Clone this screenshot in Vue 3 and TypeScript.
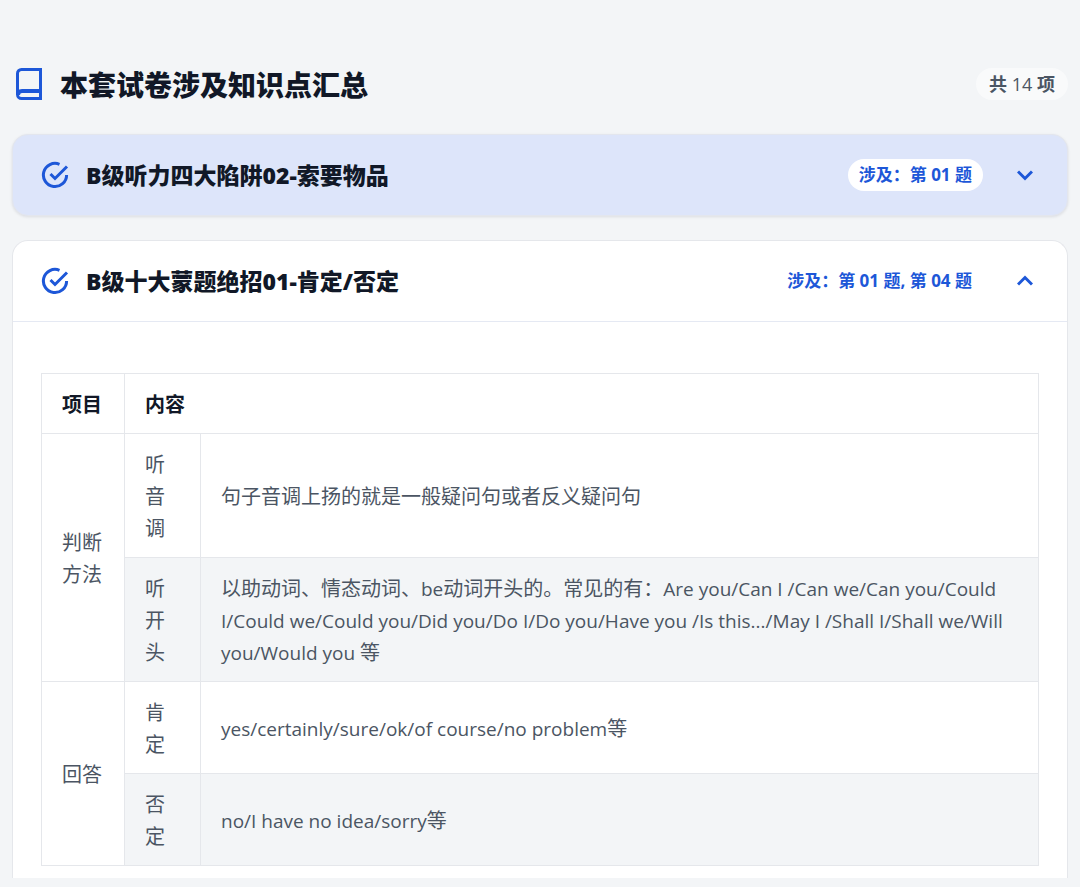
<script setup lang="ts">
import { ref } from 'vue'

interface Cell {
  text: string
  rowspan?: number
  shaded?: boolean
}

interface Run {
  text: string
  latin: boolean
}

interface Topic {
  id: number
  title: string
  refs: string
}

const total = 14
const topics: Topic[] = [
  { id: 1, title: 'B级听力四大陷阱02-索要物品', refs: '涉及：第 01 题' },
  { id: 2, title: 'B级十大蒙题绝招01-肯定/否定', refs: '涉及：第 01 题, 第 04 题' },
]
const rows: Cell[][] = [
  [
    { text: '判断方法', rowspan: 2 },
    { text: '听音调' },
    { text: '句子音调上扬的就是一般疑问句或者反义疑问句' },
  ],
  [
    { text: '听开头', shaded: true },
    {
      text: '以助动词、情态动词、be动词开头的。常见的有：Are you/Can I /Can we/Can you/Could I/Could we/Could you/Did you/Do I/Do you/Have you /Is this.../May I /Shall I/Shall we/Will you/Would you 等',
      shaded: true,
    },
  ],
  [
    { text: '回答', rowspan: 2 },
    { text: '肯定' },
    { text: 'yes/certainly/sure/ok/of course/no problem等' },
  ],
  [
    { text: '否定', shaded: true },
    { text: 'no/I have no idea/sorry等', shaded: true },
  ],
]

// English runs are set slightly smaller than the Chinese text around them.
function runs(text: string): Run[] {
  const parts = text.match(/[\x20-\x7e]+|[^\x20-\x7e]+/g) ?? []
  return parts.map((p) => ({ text: p, latin: p.charCodeAt(0) < 127 }))
}

const openId = ref<number | null>(2)
function toggle(id: number) {
  openId.value = openId.value === id ? null : id
}
</script>

<template>
  <main class="page">
    <header class="head">
      <svg class="book" viewBox="0 0 26 32" fill="none" stroke="currentColor" aria-hidden="true">
        <path stroke-width="3" d="M1.5 27V5.5a4 4 0 0 1 4-4h19v29h-19a4 4 0 0 1-4-4" />
        <path stroke-width="4" d="M2 27c0-2.5 1.5-4 4-4h18" />
      </svg>
      <h1>本套试卷涉及知识点汇总</h1>
      <span class="count">共 <span class="num">{{ total }}</span> 项</span>
    </header>

    <section v-for="t in topics" :key="t.id" class="card" :class="{ open: openId === t.id }">
      <button class="bar" type="button" :aria-expanded="openId === t.id" @click="toggle(t.id)">
        <svg class="check" viewBox="0 0 28 28" fill="none" stroke="currentColor" stroke-width="3" aria-hidden="true">
          <path d="M18.5 3.3A11.6 11.6 0 1 0 25.6 14" />
          <path d="M9.5 13l4.5 4.5L26 5.5" />
        </svg>
        <span class="title">{{ t.title }}</span>
        <span class="refs">{{ t.refs }}</span>
        <svg class="chev" viewBox="0 0 16 16" fill="none" stroke="currentColor" stroke-width="3" aria-hidden="true">
          <path d="M1 4.5l7 7 7-7" />
        </svg>
      </button>
      <div v-if="openId === t.id" class="body">
        <table>
          <colgroup>
            <col class="c1" />
            <col class="c2" />
            <col />
          </colgroup>
          <thead>
            <tr>
              <th scope="col">项目</th>
              <th scope="col" colspan="2">内容</th>
            </tr>
          </thead>
          <tbody>
            <tr v-for="(row, i) in rows" :key="i">
              <td v-for="c in row" :key="c.text" :rowspan="c.rowspan" :class="{ shaded: c.shaded }"><span v-for="(r, k) in runs(c.text)" :key="k" :class="{ latin: r.latin }">{{ r.text }}</span></td>
            </tr>
          </tbody>
        </table>
      </div>
    </section>
  </main>
</template>

<style>
body {
  background: #f3f5f7;
}
</style>

<style scoped>
.page {
  padding: 64px 12px 8px;
  font-family: 'Open Sans', 'Noto Sans CJK SC', sans-serif;
  color: #111827;
}
.head {
  display: flex;
  align-items: center;
  height: 40px;
  margin-bottom: 30px;
  padding-left: 4px;
}
.book {
  width: 26px;
  height: 32px;
  margin-right: 18px;
  color: #1d57d8;
}
h1 {
  margin: 0;
  font-family: 'Noto Sans CJK SC', sans-serif;
  font-size: 28px;
  line-height: 40px;
  font-weight: 800;
}
.count {
  margin-left: auto;
  padding: 0 13px;
  border-radius: 16px;
  background: #f9fafb;
  color: #4b5563;
  font-size: 18px;
  line-height: 32px;
  font-weight: 600;
}
.num {
  font-weight: 500;
}
.card {
  margin-bottom: 24px;
  border: 1px solid #e3e6ee;
  border-radius: 16px;
  background: #dde5fa;
  box-shadow: 0 1px 3px rgba(17, 24, 39, 0.1);
}
.card.open {
  margin-bottom: 0;
  border-color: #e5e7eb;
  border-bottom: 0;
  border-radius: 16px 16px 0 0;
  background: #fff;
  box-shadow: none;
}
.bar {
  display: flex;
  align-items: center;
  width: 100%;
  height: 80px;
  padding: 0 34px 0 28px;
  border: 0;
  background: none;
  color: #1d57d8;
  font: inherit;
  text-align: left;
  cursor: pointer;
}
.check {
  width: 28px;
  height: 28px;
  margin-right: 17px;
}
.title {
  color: #111827;
  font-size: 23px;
  line-height: 32px;
  font-weight: 800;
}
.refs {
  margin-left: auto;
  padding: 0 11px;
  border-radius: 16px;
  background: #fff;
  font-size: 17px;
  line-height: 32px;
  font-weight: 700;
}
.chev {
  width: 16px;
  height: 16px;
  margin-left: 34px;
}
.open .chev {
  transform: rotate(180deg);
}
.body {
  padding: 51px 28px 12px;
  border-top: 1px solid #e5e9f3;
}
table {
  width: 100%;
  border-collapse: collapse;
  table-layout: fixed;
  font-family: 'Noto Sans CJK SC', sans-serif;
  font-size: 20px;
  line-height: 32px;
  color: #4b5563;
}
.c1 {
  width: 83px;
}
.c2 {
  width: 76px;
}
th,
td {
  padding: 14px 20px 13px;
  border: 1px solid #e5e7eb;
  text-align: left;
  font-weight: 400;
}
th {
  color: #111827;
  font-weight: 700;
}
.latin {
  font-family: 'Open Sans', sans-serif;
  font-size: 19px;
  line-height: 24px;
}
.shaded {
  background: #f3f5f7;
}
</style>
